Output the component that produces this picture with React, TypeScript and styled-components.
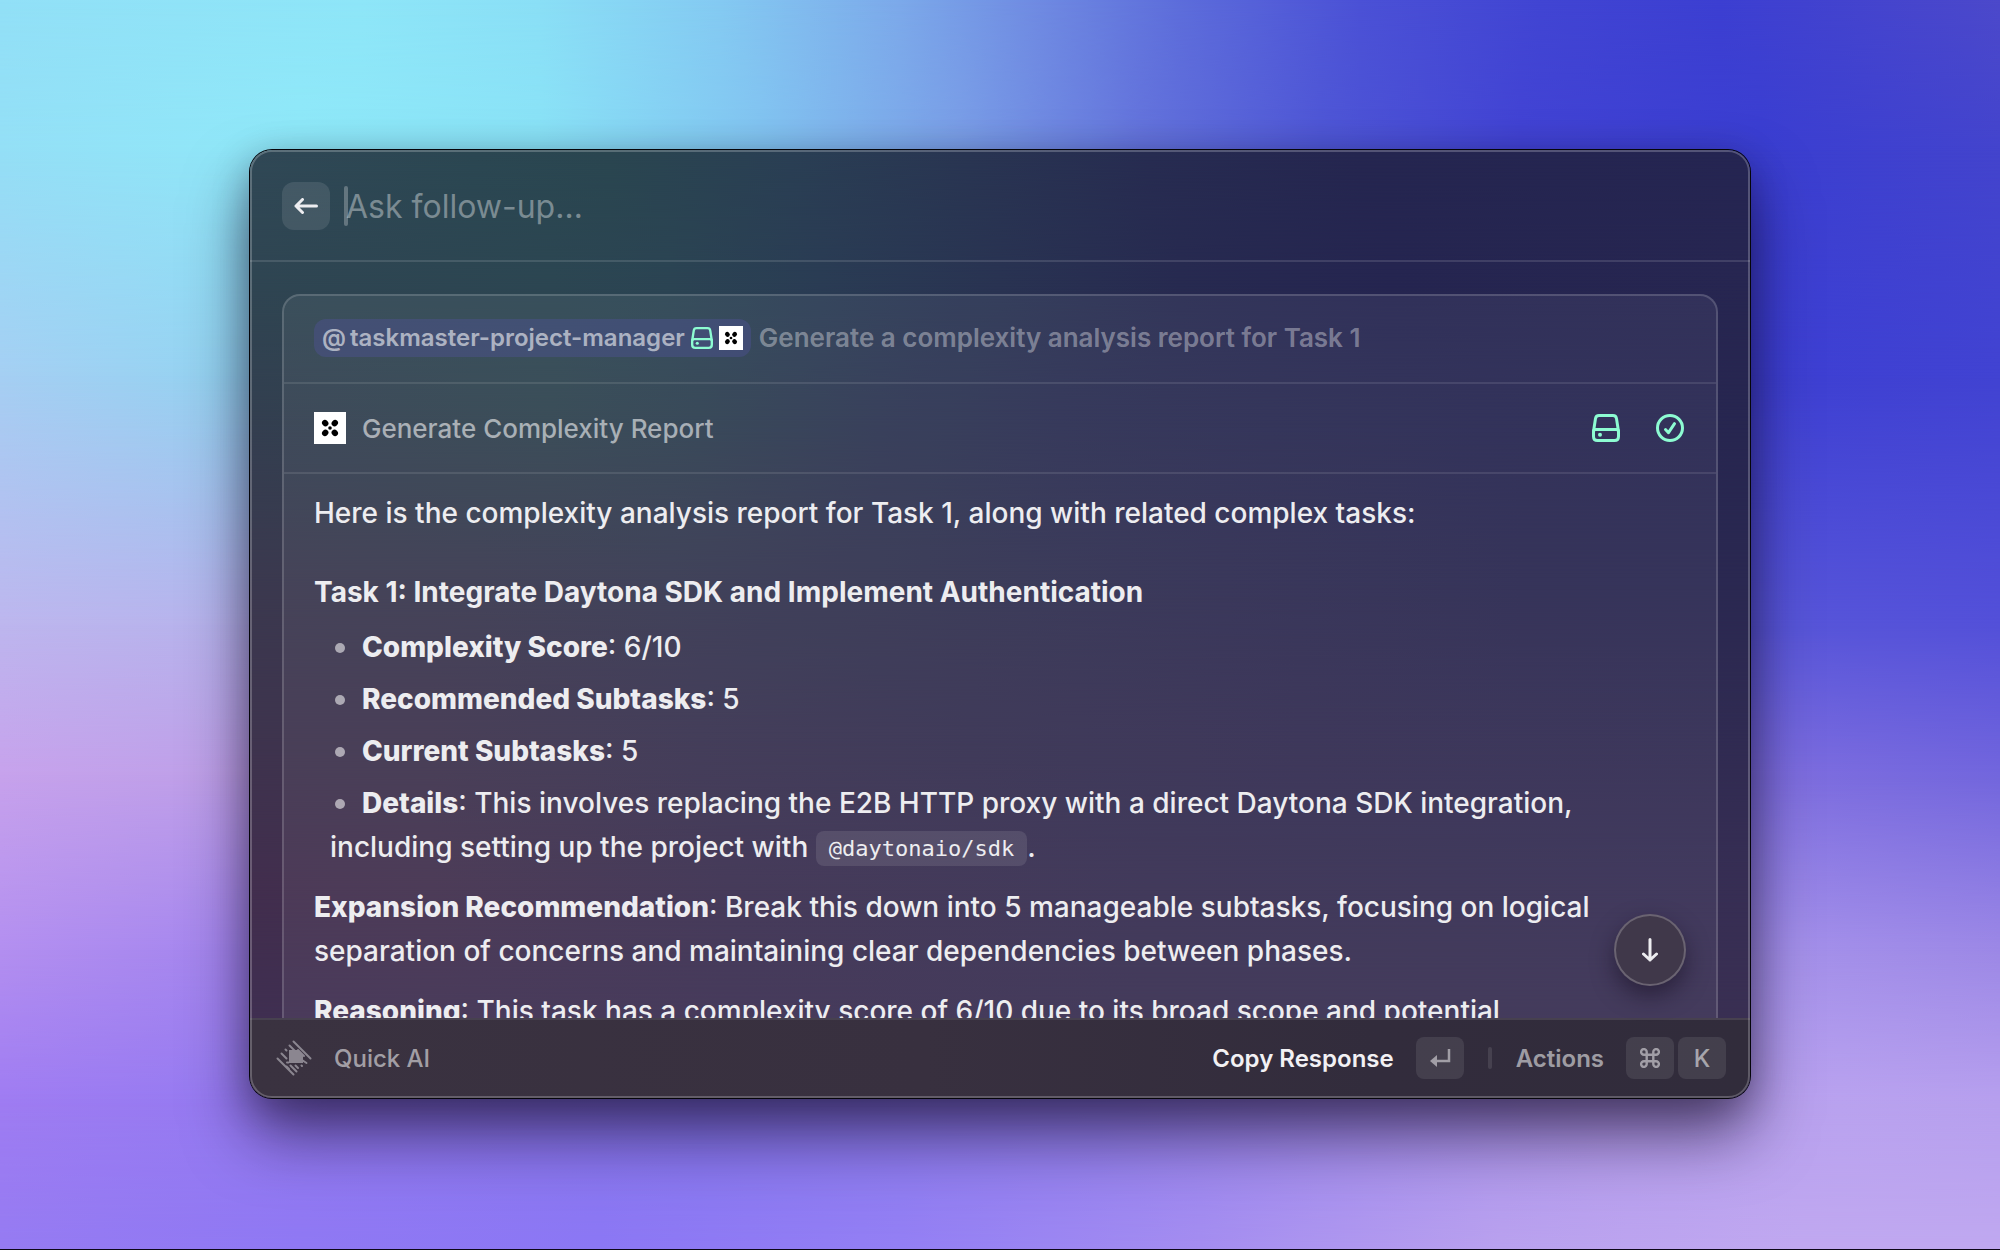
import React, { useId } from "react";
import styled, { createGlobalStyle } from "styled-components";

const GlobalStyle = createGlobalStyle`
  *, *::before, *::after { box-sizing: border-box; }
  body { margin: 0; background: #0d0718; }
  button, input { font: inherit; color: inherit; }
`;

/* ---------- Mesh gradient: rows of colour stops blended top to bottom ---------- */

type Band = { at: number; stops: string };

const wallpaperBands: Band[] = [
  { at: 0, stops: "#92e0f7 0%, #8ee6f8 18%, #8adff6 27%, #84caf2 36%, #7ca9ea 45%, #6f8ae2 52%, #5d6ddb 59%, #4b51d6 68%, #4145d3 77%, #3c3fd2 86%, #4c49cb 100%" },
  { at: 12, stops: "#94dff6 0%, #8fe9f9 15%, #8ae3f7 27%, #82c4f1 38%, #7a9ee7 48%, #6473dc 57%, #4f57d6 66%, #4243d4 76%, #3a3ed1 88%, #4344cd 100%" },
  { at: 30, stops: "#a5cff3 0%, #93d3f1 12%, #80bfe8 40%, #4c50d0 70%, #3d3fd3 88%, #4143d2 100%" },
  { at: 50, stops: "#bdb6ee 0%, #b6b2ec 12%, #8888dd 45%, #5553ce 75%, #5856d9 88%, #5350d9 100%" },
  { at: 62, stops: "#c7a2ec 0%, #bd9fe8 12%, #9080dd 45%, #7468d8 80%, #7d6ddf 90%, #7266dd 100%" },
  { at: 76, stops: "#b38ff0 0%, #a385ee 12%, #8a78e4 45%, #9080e0 80%, #a490ea 90%, #9c88e6 100%" },
  { at: 88, stops: "#9f7cf2 0%, #957af1 12%, #8777ee 35%, #927fee 55%, #b29aec 80%, #b9a2ef 92%, #b69fee 100%" },
  { at: 100, stops: "#957bf2 0%, #8f78f3 15%, #8b77f4 30%, #937ff4 45%, #a48df0 60%, #b9a1ee 75%, #c0a8f0 90%, #bfa8f0 100%" },
];

const windowBands: Band[] = [
  { at: 0, stops: "#304856 0%, #2b4752 15%, #2a4650 24%, #2a3f54 36%, #293552 48%, #272c51 60%, #252650 74%, #252552 100%" },
  { at: 14, stops: "#2f4552 0%, #2c4652 20%, #2b4453 28%, #2a3c54 38%, #293352 50%, #272a50 62%, #252550 76%, #272651 100%" },
  { at: 28, stops: "#333f50 0%, #2f434f 20%, #2d3f50 30%, #2d3652 42%, #2b2e52 54%, #292a51 68%, #272751 82%, #272650 100%" },
  { at: 45, stops: "#3b394f 0%, #39394f 15%, #363850 28%, #313250 45%, #2e2c51 65%, #2a2850 85%, #2a2851 100%" },
  { at: 62, stops: "#3e344e 0%, #3e344e 12%, #393250 30%, #352f50 48%, #322c51 70%, #302b52 100%" },
  { at: 78, stops: "#422e4e 0%, #42304e 12%, #3b2f50 32%, #372e51 60%, #362e52 80%, #372e54 100%" },
  { at: 100, stops: "#3e2f53 0%, #3c2f53 30%, #3b3052 60%, #3b3052 100%" },
];

const MeshGrid = styled.div`
  position: absolute;
  inset: 0;
  z-index: -1;
  display: grid;
`;

const MeshBand = styled.div<{ $from: number; $to: number; $stops: string }>`
  grid-area: 1 / 1;
  background: linear-gradient(to right, ${(p) => p.$stops});
  mask-image: ${(p) =>
    p.$to === 0 ? "none" : `linear-gradient(to bottom, transparent ${p.$from}%, #000 ${p.$to}%)`};
`;

const Mesh = ({ bands }: { bands: Band[] }) => (
  <MeshGrid aria-hidden="true">
    {bands.map((band, i) => (
      <MeshBand key={band.at} $from={i ? bands[i - 1].at : 0} $to={band.at} $stops={band.stops} />
    ))}
  </MeshGrid>
);

/* ---------- Layout ---------- */

const Desktop = styled.div`
  position: relative;
  z-index: 0;
  display: flex;
  height: 100vh;
  padding: 150px 12.5% 151px;
  border-bottom: 1px solid #0d0718;
  font-family: Inter, "Noto Sans", sans-serif;
  color: #ededf0;
`;

const Panel = styled.main`
  position: relative;
  z-index: 0;
  flex: 1;
  min-width: 0;
  display: flex;
  flex-direction: column;
  border-radius: 22px;
  overflow: hidden;
`;

const PanelShadow = styled.div`
  flex: 1;
  min-width: 0;
  display: flex;
  border-radius: 22px;
  box-shadow: 0 0 0 1px #05050a, 0 36px 64px rgba(14, 6, 30, 0.58), 0 8px 36px rgba(14, 6, 30, 0.26);
`;

const PanelRim = styled.div`
  position: absolute;
  inset: 0;
  border: 2px solid rgba(255, 255, 255, 0.22);
  border-radius: 22px;
  pointer-events: none;
`;

const Header = styled.header`
  display: flex;
  align-items: center;
  gap: 14px;
  height: 112px;
  padding: 2px 32px 0;
  border-bottom: 2px solid rgba(255, 255, 255, 0.12);
`;

const BackButton = styled.button`
  display: grid;
  place-items: center;
  width: 48px;
  height: 48px;
  padding: 0;
  border: 0;
  border-radius: 12px;
  background: rgba(255, 255, 255, 0.1);
`;

const Prompt = styled.div`
  position: relative;
  flex: 1;
  display: flex;
`;

const Caret = styled.span`
  position: absolute;
  left: 0;
  top: 0;
  width: 4px;
  height: 40px;
  border-radius: 2px;
  background: rgba(255, 255, 255, 0.26);
`;

const PromptInput = styled.input`
  width: 100%;
  height: 40px;
  padding: 0 2px;
  border: 0;
  outline: 0;
  background: transparent;
  font-size: 32px;
  &::placeholder { color: rgba(255, 255, 255, 0.38); opacity: 1; }
`;

const Conversation = styled.section`
  flex: 1;
  min-height: 0;
  overflow: hidden;
  padding: 32px 32px 0;
`;

const Card = styled.article`
  border: 2px solid rgba(255, 255, 255, 0.16);
  border-radius: 18px;
  background: rgba(255, 255, 255, 0.06);
`;

const CardRow = styled.div`
  display: flex;
  align-items: center;
  height: 88px;
  padding: 0 30px 2px;
  border-bottom: 2px solid rgba(255, 255, 255, 0.1);
  font-size: 26px;
`;

const ToolRow = styled(CardRow)`
  height: 90px;
  gap: 16px;
  padding-bottom: 0;
  color: rgba(255, 255, 255, 0.56);
  font-weight: 500;
`;

const Mention = styled.span`
  display: flex;
  align-items: center;
  gap: 6px;
  height: 38px;
  margin-right: 8px;
  padding: 0 8px;
  border-radius: 12px;
  background: rgba(84, 84, 160, 0.36);
  color: rgba(255, 255, 255, 0.58);
  font-size: 24px;
  font-weight: 600;
`;

const Handle = styled.span`
  display: flex;
  gap: 4px;
  padding-bottom: 2px;
`;

const Query = styled.span`
  padding-bottom: 2px;
  color: rgba(255, 255, 255, 0.37);
  font-weight: 600;
`;

const StatusIcons = styled.span`
  display: flex;
  gap: 36px;
  margin-left: auto;
  padding-right: 2px;
`;

const Answer = styled.div`
  padding: 17px 30px;
  font-size: 28px;
  font-weight: 500;
  line-height: 44px;
`;

const Paragraph = styled.p`
  margin: 0 0 16px;
`;

const TaskTitle = styled.h2`
  margin: 35px 0 11px;
  font-size: 28px;
  font-weight: 700;
`;

const Facts = styled.ul`
  display: grid;
  gap: 8px;
  margin: 0 0 16px;
  padding: 0 0 0 16px;
  list-style: none;
`;

const Fact = styled.li`
  &::before {
    content: "";
    display: inline-block;
    width: 10px;
    height: 10px;
    margin: 0 17px 4px 5px;
    border-radius: 50%;
    background: rgba(255, 255, 255, 0.55);
  }
`;

const Strong = styled.strong`
  font-weight: 800;
`;

const Code = styled.code`
  padding: 5px 13px;
  border-radius: 8px;
  background: rgba(255, 255, 255, 0.1);
  font-family: "DejaVu Sans Mono", monospace;
  font-size: 22px;
  line-height: 1;
  vertical-align: 1px;
`;

const ScrollDown = styled.button`
  position: absolute;
  right: 64px;
  bottom: 112px;
  display: grid;
  place-items: center;
  width: 72px;
  height: 72px;
  padding: 0;
  border: 2px solid rgba(255, 255, 255, 0.22);
  border-radius: 50%;
  background: #40384a;
  box-shadow: 0 10px 22px rgba(20, 12, 30, 0.5);
`;

const Footer = styled.footer`
  display: flex;
  align-items: center;
  height: 80px;
  padding: 0 24px 2px 26px;
  border-top: 2px solid #47414f;
  background: linear-gradient(to right, #3a3240, #38303f 45%, #322c3c 75%, #312c3b);
  font-size: 24px;
  font-weight: 500;
  color: rgba(255, 255, 255, 0.55);
`;

const AppName = styled.span`
  margin: 0 auto 0 22px;
`;

const FooterAction = styled.button<{ $primary?: boolean }>`
  display: flex;
  align-items: center;
  gap: 22px;
  padding: 0;
  border: 0;
  background: none;
  font-weight: 600;
  color: ${(p) => (p.$primary ? "#f2f1f4" : "rgba(255, 255, 255, 0.55)")};
`;

const Keys = styled.span`
  display: flex;
  gap: 4px;
`;

const Key = styled.kbd`
  display: grid;
  place-items: center;
  width: 48px;
  height: 42px;
  border-radius: 8px;
  background: rgba(255, 255, 255, 0.09);
  color: rgba(255, 255, 255, 0.55);
  font-family: inherit;
  font-weight: 500;
`;

const Separator = styled.span`
  width: 4px;
  height: 22px;
  margin: 0 24px;
  border-radius: 2px;
  background: rgba(255, 255, 255, 0.1);
`;

const Icon = styled.svg`
  display: block;
  flex: none;
`;

/* ---------- Icons ---------- */

const ArrowLeft = () => (
  <Icon width="24" height="16" viewBox="0 0 24 16" fill="none" stroke="#ededf0" strokeWidth="3" strokeLinecap="round" strokeLinejoin="round">
    <path d="M22.5 8H2M8.5 1.5 2 8l6.5 6.5" />
  </Icon>
);

const ArrowDown = () => (
  <Icon width="16" height="24" viewBox="0 0 16 24" fill="none" stroke="#ededf0" strokeWidth="3" strokeLinecap="round" strokeLinejoin="round">
    <path d="M8 1.5V22M1.5 16 8 22l6.5-6" />
  </Icon>
);

const DriveIcon = ({ size }: { size: number }) => (
  <Icon width={size} height={size} viewBox="0 0 28 28" fill="none" stroke="#8dfcd2" strokeWidth="3" strokeLinejoin="round">
    <path d="M1.5 17.5 3.5 4.6C3.8 2.6 5 1.5 7 1.5h14c2 0 3.2 1.1 3.5 3.1l2 12.9" />
    <path d="M1.5 17.5c0-1.3.9-2 2.2-2h20.6c1.3 0 2.2.7 2.2 2v5c0 2.6-1.4 4-4 4h-17c-2.6 0-4-1.4-4-4z" />
    <circle cx="8" cy="20.700" r="2" fill="#8dfcd2" stroke="none" />
  </Icon>
);

const CheckIcon = () => (
  <Icon width="28" height="28" viewBox="0 0 28 28" fill="none" stroke="#8dfcd2" strokeWidth="3" strokeLinecap="round" strokeLinejoin="round">
    <circle cx="14" cy="14" r="12.5" />
    <path d="m9.500 15.500 3 3.200 6-9" />
  </Icon>
);

const TaskmasterLogo = ({ size }: { size: number }) => (
  <Icon width={size} height={size} viewBox="0 0 32 32">
    <rect width="32" height="32" fill="#fff" />
    <ellipse cx="11.2" cy="11.2" rx="3.4" ry="3" transform="rotate(45 11.2 11.2)" />
    <ellipse cx="20.8" cy="11.2" rx="3.4" ry="3" transform="rotate(-45 20.8 11.2)" />
    <ellipse cx="11.2" cy="20.8" rx="3.4" ry="3" transform="rotate(-45 11.2 20.8)" />
    <ellipse cx="20.8" cy="20.8" rx="3.4" ry="3" transform="rotate(45 20.8 20.8)" />
    <circle cx="16" cy="16" r="1.8" />
  </Icon>
);

const QuickAiLogo = () => {
  const cut = useId();
  return (
    <Icon width="36" height="36" viewBox="0 0 36 36" fill="none" stroke="#8b8690" strokeWidth="2">
      <clipPath id={cut}>
        <path d="M0 0h36v36H0z" />
      </clipPath>
      <g strokeLinecap="round" clipPath={`url(#${cut})`}>
        <path d="M17.5 1.5 34.5 18.5M1.5 18.5l16 16" />
        <path d="m13.5 5.5 5 5M9.5 9.5l1 1M5.5 13.5l5 5" />
        <path d="M10.5 26.5 13 29M11 22.5h1.5M14.5 25.5l6 6M19.5 25.5l2.5 2.5M25.5 25.5l.5.5M26 20l4.5 3" />
        <path d="m22 10 6 6" />
      </g>
      <path d="M13 10h9l5 5v8H13z" fill="#8b8690" stroke="none" />
    </Icon>
  );
};

const ReturnIcon = () => (
  <Icon width="22" height="18" viewBox="0 0 22 18" fill="none" stroke="#a19ea6" strokeWidth="2.5">
    <path d="M20 0v12H7" />
    <path d="M1 12 8 6v12z" fill="#a19ea6" stroke="none" />
  </Icon>
);

const CommandIcon = () => (
  <Icon width="20" height="20" viewBox="0 0 20 20" fill="none" stroke="#a19ea6" strokeWidth="2.4">
    <path d="M6.7 6.7V4a2.8 2.8 0 1 0-2.8 2.7h12.2A2.8 2.8 0 1 0 13.3 4v12a2.8 2.8 0 1 0 2.8-2.7H3.9A2.8 2.8 0 1 0 6.7 16z" />
  </Icon>
);

/* ---------- Page ---------- */

const facts: { label: string; value: React.ReactNode }[] = [
  { label: "Complexity Score", value: "6/10" },
  { label: "Recommended Subtasks", value: "5" },
  { label: "Current Subtasks", value: "5" },
  {
    label: "Details",
    value: (
      <>
        This involves replacing the E2B HTTP proxy with a direct Daytona SDK integration, including
        setting up the project with <Code>@daytonaio/sdk</Code>.
      </>
    ),
  },
];

export default function App() {
  return (
    <>
      <GlobalStyle />
      <Desktop>
        <Mesh bands={wallpaperBands} />
        <PanelShadow>
          <Panel>
            <Mesh bands={windowBands} />
            <Header>
              <BackButton type="button" aria-label="Back">
                <ArrowLeft />
              </BackButton>
              <Prompt>
                <PromptInput type="text" aria-label="Ask follow-up" placeholder="Ask follow-up…" />
                <Caret />
              </Prompt>
            </Header>
            <Conversation>
              <Card>
                <CardRow>
                  <Mention>
                    <Handle>
                      <span>@</span>
                      <span>taskmaster-project-manager</span>
                    </Handle>
                    <DriveIcon size={22} />
                    <TaskmasterLogo size={24} />
                  </Mention>
                  <Query>Generate a complexity analysis report for Task 1</Query>
                </CardRow>
                <ToolRow>
                  <TaskmasterLogo size={32} />
                  <span>Generate Complexity Report</span>
                  <StatusIcons>
                    <DriveIcon size={28} />
                    <CheckIcon />
                  </StatusIcons>
                </ToolRow>
                <Answer>
                  <Paragraph>
                    Here is the complexity analysis report for Task 1, along with related complex tasks:
                  </Paragraph>
                  <TaskTitle>Task 1: Integrate Daytona SDK and Implement Authentication</TaskTitle>
                  <Facts>
                    {facts.map((fact) => (
                      <Fact key={fact.label}>
                        <Strong>{fact.label}</Strong>: {fact.value}
                      </Fact>
                    ))}
                  </Facts>
                  <Paragraph>
                    <Strong>Expansion Recommendation</Strong>: Break this down into 5 manageable subtasks,
                    focusing on logical separation of concerns and maintaining clear dependencies between
                    phases.
                  </Paragraph>
                  <Paragraph>
                    <Strong>Reasoning</Strong>: This task has a complexity score of 6/10 due to its broad
                    scope and potential
                  </Paragraph>
                </Answer>
              </Card>
            </Conversation>
            <ScrollDown type="button" aria-label="Scroll to bottom">
              <ArrowDown />
            </ScrollDown>
            <Footer>
              <QuickAiLogo />
              <AppName>Quick AI</AppName>
              <FooterAction type="button" $primary>
                Copy Response
                <Key>
                  <ReturnIcon />
                </Key>
              </FooterAction>
              <Separator />
              <FooterAction type="button">
                Actions
                <Keys>
                  <Key>
                    <CommandIcon />
                  </Key>
                  <Key>K</Key>
                </Keys>
              </FooterAction>
            </Footer>
            <PanelRim />
          </Panel>
        </PanelShadow>
      </Desktop>
    </>
  );
}
